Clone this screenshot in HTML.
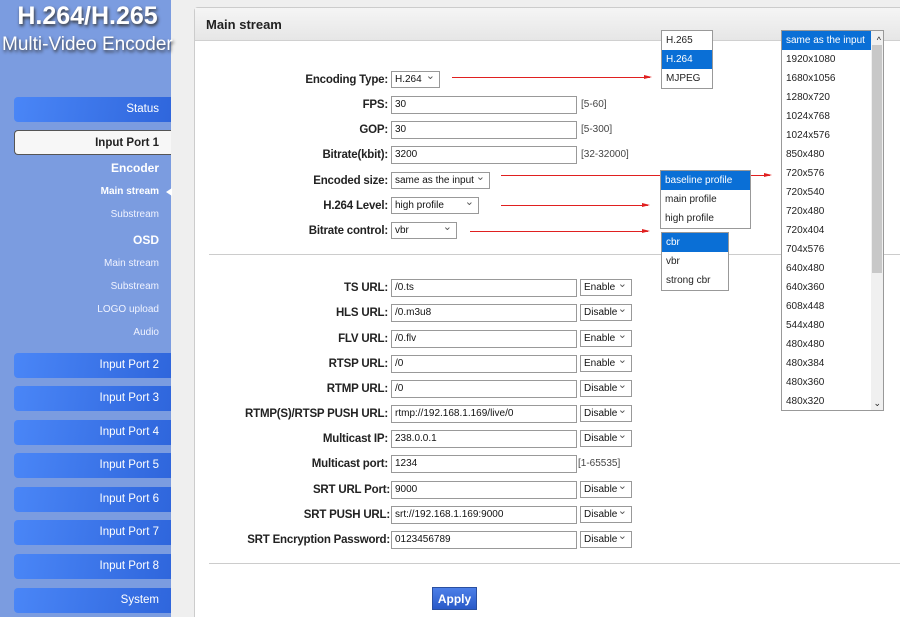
<!DOCTYPE html>
<html><head><style>
*{margin:0;padding:0;box-sizing:border-box}
html,body{width:900px;height:617px;overflow:hidden}
body{background:#efefef;font-family:"Liberation Sans",Arial,sans-serif;position:relative}
.sb{position:absolute;left:0;top:0;width:171px;height:617px;background:#7b9ce0}
.logo1{position:absolute;left:0;width:175px;top:2px;text-align:center;color:#fff;font-weight:bold;font-size:25px;text-shadow:1px 2px 3px #333}
.logo2{position:absolute;left:2px;top:34px;color:#fff;font-size:19px;white-space:nowrap;text-shadow:1px 2px 3px #333}
.btn{position:absolute;left:14px;width:157px;height:25px;border-radius:4px 0 0 4px;background:linear-gradient(100deg,#4a86f7,#2f66dc);color:#fff;font-size:11.5px;text-align:right;padding-right:12px;line-height:25px}
.btn.on{background:#f7f7f7;color:#222;font-weight:bold;border:1px solid #555;border-right:none}
.st{position:absolute;right:12px;color:#f0f3ff;font-size:10px;text-align:right;width:150px}
.sth{font-weight:bold;font-size:12px;color:#fff}
.panel{position:absolute;left:194px;top:7px;width:720px;height:620px;background:#fff;border:1px solid #ccc;border-radius:4px}
.ph{height:33px;background:linear-gradient(#f5f5f5,#e6e6e6);border-bottom:1px solid #d0d0d0;font-weight:bold;font-size:13px;padding:9px 11px;color:#222}
.lb{position:absolute;right:512px;margin-top:2px;font-weight:bold;font-size:11.5px;letter-spacing:-0.2px;color:#222;white-space:nowrap;text-align:right}
.in{position:absolute;left:391px;width:186px;height:18px;border:1px solid #999;font-size:10px;line-height:16px;padding:0 3px;color:#111;background:#fff}
.sel{position:absolute;height:17px;border:1px solid #999;font-size:10px;line-height:15px;padding:0 3px;color:#111;background:#fff}
.sel:after{content:"⌄";position:absolute;right:4px;top:-3px;font-size:11px;color:#555}
.rng{position:absolute;font-size:10px;color:#444}
.hr{position:absolute;left:209px;width:700px;height:1px;background:#ccc}
.ar{position:absolute;height:1px;background:#e02020}
.ar:after{content:"";position:absolute;right:-2px;top:-2px;border-left:8px solid #e02020;border-top:2.5px solid transparent;border-bottom:2.5px solid transparent}
.dd{position:absolute;background:#fff;border:1px solid #999;font-size:10px;color:#222}
.dd div{height:19px;line-height:19px;padding-left:4px}
.dd .h{background:#0a6fd6;color:#fff}
.apply{position:absolute;left:432px;top:587px;width:45px;height:23px;background:linear-gradient(#4c7fe8,#2a5ac8);color:#fff;font-weight:bold;font-size:12px;text-align:center;line-height:23px;border:1px solid #2a4fa0}
</style></head><body>
<div class="sb">
<div class="logo1">H.264/H.265</div>
<div class="logo2">Multi-Video Encoder</div>
<div class="btn" style="top:97px">Status</div>
<div class="btn on" style="top:130px">Input Port 1</div>
<div class="st sth" style="top:161px">Encoder</div>
<div class="st" style="top:186px;font-weight:bold;color:#fff">Main stream</div>
<div style="position:absolute;left:166px;top:188px;border-right:6px solid #fff;border-top:4px solid transparent;border-bottom:4px solid transparent"></div>
<div class="st" style="top:209px">Substream</div>
<div class="st sth" style="top:233px">OSD</div>
<div class="st" style="top:258px">Main stream</div>
<div class="st" style="top:281px">Substream</div>
<div class="st" style="top:304px">LOGO upload</div>
<div class="st" style="top:327px">Audio</div>
<div class="btn" style="top:353px">Input Port 2</div>
<div class="btn" style="top:386px">Input Port 3</div>
<div class="btn" style="top:420px">Input Port 4</div>
<div class="btn" style="top:453px">Input Port 5</div>
<div class="btn" style="top:487px">Input Port 6</div>
<div class="btn" style="top:520px">Input Port 7</div>
<div class="btn" style="top:554px">Input Port 8</div>
<div class="btn" style="top:588px">System</div>
</div>
<div class="panel"><div class="ph">Main stream</div></div>

<div class="lb" style="top:72px">Encoding Type:</div><div class="sel" style="left:391px;top:71px;width:49px">H.264</div>
<div class="lb" style="top:97px">FPS:</div><div class="in" style="top:96px">30</div><div class="rng" style="left:581px;top:99px">[5-60]</div>
<div class="lb" style="top:122px">GOP:</div><div class="in" style="top:121px">30</div><div class="rng" style="left:581px;top:124px">[5-300]</div>
<div class="lb" style="top:147px">Bitrate(kbit):</div><div class="in" style="top:146px">3200</div><div class="rng" style="left:581px;top:149px">[32-32000]</div>
<div class="lb" style="top:173px">Encoded size:</div><div class="sel" style="left:391px;top:172px;width:99px">same as the input</div>
<div class="lb" style="top:198px">H.264 Level:</div><div class="sel" style="left:391px;top:197px;width:88px">high profile</div>
<div class="lb" style="top:223px">Bitrate control:</div><div class="sel" style="left:391px;top:222px;width:66px">vbr</div>
<div class="hr" style="top:254px"></div>

<div class="lb" style="top:280px">TS URL:</div><div class="in" style="top:279px">/0.ts</div><div class="sel" style="left:580px;top:279px;width:52px">Enable</div>
<div class="lb" style="top:305px">HLS URL:</div><div class="in" style="top:304px">/0.m3u8</div><div class="sel" style="left:580px;top:304px;width:52px">Disable</div>
<div class="lb" style="top:331px">FLV URL:</div><div class="in" style="top:330px">/0.flv</div><div class="sel" style="left:580px;top:330px;width:52px">Enable</div>
<div class="lb" style="top:356px">RTSP URL:</div><div class="in" style="top:355px">/0</div><div class="sel" style="left:580px;top:355px;width:52px">Enable</div>
<div class="lb" style="top:381px">RTMP URL:</div><div class="in" style="top:380px">/0</div><div class="sel" style="left:580px;top:380px;width:52px">Disable</div>
<div class="lb" style="top:406px">RTMP(S)/RTSP PUSH URL:</div><div class="in" style="top:405px">rtmp://192.168.1.169/live/0</div><div class="sel" style="left:580px;top:405px;width:52px">Disable</div>
<div class="lb" style="top:431px">Multicast IP:</div><div class="in" style="top:430px">238.0.0.1</div><div class="sel" style="left:580px;top:430px;width:52px">Disable</div>
<div class="lb" style="top:456px">Multicast port:</div><div class="in" style="top:455px">1234</div><div class="rng" style="left:578px;top:458px">[1-65535]</div>
<div class="lb" style="top:482px;right:510px">SRT URL Port:</div><div class="in" style="top:481px">9000</div><div class="sel" style="left:580px;top:481px;width:52px">Disable</div>
<div class="lb" style="top:507px;right:510px">SRT PUSH URL:</div><div class="in" style="top:506px">srt://192.168.1.169:9000</div><div class="sel" style="left:580px;top:506px;width:52px">Disable</div>
<div class="lb" style="top:532px;right:510px">SRT Encryption Password:</div><div class="in" style="top:531px">0123456789</div><div class="sel" style="left:580px;top:531px;width:52px">Disable</div>
<div class="hr" style="top:563px"></div>
<div class="apply">Apply</div>

<div class="ar" style="left:452px;top:77px;width:198px"></div>
<div class="ar" style="left:501px;top:175px;width:269px"></div>
<div class="ar" style="left:501px;top:205px;width:147px"></div>
<div class="ar" style="left:470px;top:231px;width:178px"></div>

<div class="dd" style="left:661px;top:30px;width:52px"><div>H.265</div><div class="h">H.264</div><div>MJPEG</div></div>
<div class="dd" style="left:660px;top:170px;width:91px"><div class="h">baseline profile</div><div>main profile</div><div>high profile</div></div>
<div class="dd" style="left:661px;top:232px;width:68px"><div class="h">cbr</div><div>vbr</div><div>strong cbr</div></div>
<div class="dd" style="left:781px;top:30px;width:103px;height:381px;overflow:hidden">
<div style="position:absolute;right:0;top:0;width:12px;height:379px;background:#f0f0f0"></div>
<div style="position:absolute;right:1px;top:14px;width:10px;height:228px;background:#c8c8c8"></div>
<div style="position:absolute;right:2px;top:0;font-size:9px;padding:0">^</div>
<div style="position:absolute;right:2px;bottom:2px;font-size:9px;height:auto;line-height:9px;padding:0">⌄</div>
<div class="h" style="width:89px">same as the input</div><div>1920x1080</div><div>1680x1056</div><div>1280x720</div><div>1024x768</div><div>1024x576</div><div>850x480</div><div>720x576</div><div>720x540</div><div>720x480</div><div>720x404</div><div>704x576</div><div>640x480</div><div>640x360</div><div>608x448</div><div>544x480</div><div>480x480</div><div>480x384</div><div>480x360</div><div>480x320</div>
</div>
</body></html>
